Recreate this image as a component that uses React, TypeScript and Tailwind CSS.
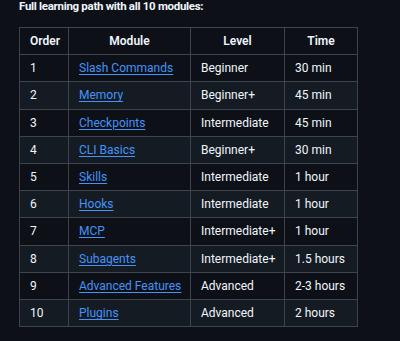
import React from "react";

type Row = {
  order: number;
  module: string;
  level: string;
  time: string;
};

const rows: Row[] = [
  { order: 1, module: "Slash Commands", level: "Beginner", time: "30 min" },
  { order: 2, module: "Memory", level: "Beginner+", time: "45 min" },
  { order: 3, module: "Checkpoints", level: "Intermediate", time: "45 min" },
  { order: 4, module: "CLI Basics", level: "Beginner+", time: "30 min" },
  { order: 5, module: "Skills", level: "Intermediate", time: "1 hour" },
  { order: 6, module: "Hooks", level: "Intermediate", time: "1 hour" },
  { order: 7, module: "MCP", level: "Intermediate+", time: "1 hour" },
  { order: 8, module: "Subagents", level: "Intermediate+", time: "1.5 hours" },
  { order: 9, module: "Advanced Features", level: "Advanced", time: "2-3 hours" },
  { order: 10, module: "Plugins", level: "Advanced", time: "2 hours" },
];

const cell =
  "border border-[#3d444d] px-[10px] py-[4px] leading-[18.2px] whitespace-nowrap";

export default function App() {
  return (
    <div className="h-[341px] w-[400px] overflow-hidden bg-[#0d1117] font-['Roboto',Arial,sans-serif] text-[12px] text-[#f0f6fc]">
      <p className="ml-[19px] pt-[0px] text-[11.5px] font-bold leading-[12px] tracking-[-0.3px]">
        Full learning path with all 10 modules:
      </p>
      <table className="ml-[19px] mt-[15px] w-[338px] table-fixed border-collapse">
        <colgroup>
          <col className="w-[49px]" />
          <col className="w-[122px]" />
          <col className="w-[94px]" />
          <col className="w-[73px]" />
        </colgroup>
        <thead>
          <tr>
            <th className={`${cell} text-center font-semibold`}>Order</th>
            <th className={`${cell} text-center font-semibold`}>Module</th>
            <th className={`${cell} text-center font-semibold`}>Level</th>
            <th className={`${cell} text-center font-semibold`}>Time</th>
          </tr>
        </thead>
        <tbody>
          {rows.map((r, i) => (
            <tr key={r.order} className={i % 2 === 1 ? "bg-[#151b23]" : ""}>
              <td className={cell}>{r.order}</td>
              <td className={cell}>
                <a
                  href="#"
                  className="text-[#4493f8] underline decoration-[#4493f8] underline-offset-[2px]"
                >
                  {r.module}
                </a>
              </td>
              <td className={cell}>{r.level}</td>
              <td className={cell}>{r.time}</td>
            </tr>
          ))}
        </tbody>
      </table>
    </div>
  );
}
